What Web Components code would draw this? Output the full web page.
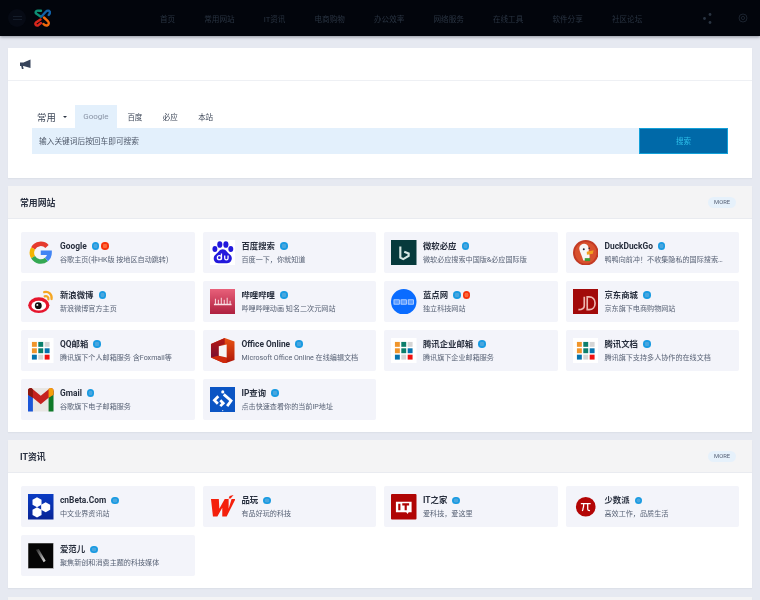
<!DOCTYPE html>
<html lang="zh">
<head>
<meta charset="utf-8">
<title>导航</title>
<style>
  html, body { margin: 0; padding: 0; height: 600px; overflow: hidden; }
  body {
    background: #e6e9f1;
    font-family: Roboto, "Noto Sans CJK SC", sans-serif;
  }
</style>
</head>
<body>
<nav-bar></nav-bar>
<page-main>
  <search-panel></search-panel>

  <site-section heading="常用网站">
    <site-card name="Google" desc="谷歌主页(非HK版 按地区自动跳转)" icon="google" hot></site-card>
    <site-card name="百度搜索" desc="百度一下，你就知道" icon="baidu"></site-card>
    <site-card name="微软必应" desc="微软必应搜索中国版&必应国际版" icon="bing"></site-card>
    <site-card name="DuckDuckGo" desc="鸭鸭向前冲！不收集隐私的国际搜索…" icon="duck"></site-card>
    <site-card name="新浪微博" desc="新浪微博官方主页" icon="weibo"></site-card>
    <site-card name="哔哩哔哩" desc="哔哩哔哩动画 知名二次元网站" icon="bili"></site-card>
    <site-card name="蓝点网" desc="独立科技网站" icon="landian" hot></site-card>
    <site-card name="京东商城" desc="京东旗下电商购物网站" icon="jd"></site-card>
    <site-card name="QQ邮箱" desc="腾讯旗下个人邮箱服务 含Foxmail等" icon="tencent"></site-card>
    <site-card name="Office Online" desc="Microsoft Office Online 在线编辑文档" icon="office"></site-card>
    <site-card name="腾讯企业邮箱" desc="腾讯旗下企业邮箱服务" icon="tencent"></site-card>
    <site-card name="腾讯文档" desc="腾讯旗下支持多人协作的在线文档" icon="tencent"></site-card>
    <site-card name="Gmail" desc="谷歌旗下电子邮箱服务" icon="gmail"></site-card>
    <site-card name="IP查询" desc="点击快速查看你的当前IP地址" icon="ip"></site-card>
  </site-section>

  <site-section heading="IT资讯">
    <site-card name="cnBeta.Com" desc="中文业界资讯站" icon="cnbeta"></site-card>
    <site-card name="品玩" desc="有品好玩的科技" icon="pingwest"></site-card>
    <site-card name="IT之家" desc="爱科技，爱这里" icon="ithome"></site-card>
    <site-card name="少数派" desc="高效工作，品质生活" icon="sspai"></site-card>
    <site-card name="爱范儿" desc="聚焦新创和消费主题的科技媒体" icon="ifanr"></site-card>
  </site-section>

  <site-section></site-section>
</page-main>

<script>
const ICONS = {
  google: `<svg viewBox="0 0 26 26"><g fill="none" stroke-width="4.600">
    <path d="M19.400 6.600A9 9 0 0 0 5.200 8.500" stroke="#e53a2e"/>
    <path d="M5.200 8.500a9 9 0 0 0 0 9" stroke="#f4b400"/>
    <path d="M5.200 17.500a9 9 0 0 0 13.600 2.400" stroke="#34a853"/>
    <path d="M18.800 19.900A9 9 0 0 0 22 13H13" stroke="#4285f4"/></g></svg>`,
  baidu: `<svg viewBox="0 0 26 26"><rect width="26" height="26" fill="#fff"/><g fill="#2319dc">
    <ellipse cx="5" cy="9.200" rx="2.500" ry="3.100"/><ellipse cx="10" cy="4.600" rx="2.600" ry="3.400"/>
    <ellipse cx="16.200" cy="4.600" rx="2.600" ry="3.400"/><ellipse cx="21.200" cy="9.200" rx="2.500" ry="3.100"/>
    <path d="M13 9.500c3.500 0 4.200 3 6.600 4.700 2.600 1.900 3.100 4 2.300 6.200-.8 2.500-3.200 3.600-5.300 3.300H9.400c-2.600.3-4.800-1-5.400-3.300-.6-2.300.1-4.300 2.300-6 2.600-2 3.300-4.900 6.700-4.900z"/></g>
    <g fill="none" stroke="#fff" stroke-width="1.300"><circle cx="9.600" cy="18" r="2.100"/><path d="M11.700 13.800V20M15 15.900v2.700a1.700 1.700 0 0 0 3.400 0v-2.700"/></g></svg>`,
  bing: `<svg viewBox="0 0 26 26"><rect width="26" height="26" fill="#063a3c"/>
    <path d="M9.500 6.500v11.500l3 1.500 5.500-3.300v-2.400l-4.500-1.800" fill="none" stroke="#d6e8e4" stroke-width="2.200"/></svg>`,
  duck: `<svg viewBox="0 0 26 26"><circle cx="13" cy="13" r="13" fill="#c23a24"/><circle cx="13" cy="13" r="11" fill="#d8512e"/>
    <path d="M8 5c3-2 6.500-1 7.500 1.500 1.100 3 0 5 1 7.500.8 2 .6 4.500-.5 7H10.500c-1-4-3.500-8.500-4-11.500C6.200 7.500 6.800 6 8 5z" fill="#f6f6f6"/>
    <path d="M14 12l7-1.500-.8 3.500-6 1z" fill="#f2a01e"/><path d="M12 18.500h5.500v3H12z" fill="#3f9c35"/>
    <circle cx="11" cy="9.500" r="1" fill="#223"/><circle cx="16.500" cy="8.500" r=".8" fill="#223"/></svg>`,
  weibo: `<svg viewBox="0 0 26 26"><ellipse cx="11" cy="16.500" rx="10.800" ry="8" fill="#e6162d"/><ellipse cx="11" cy="17" rx="7.500" ry="5" fill="#fff"/>
    <circle cx="10.500" cy="17" r="3.500" fill="#111"/><circle cx="9.500" cy="16.200" r="1" fill="#fff"/>
    <path d="M17 7.500c2-.8 4.200.5 3.800 3M16.500 3.200c4.500-1.200 8.300 2.300 7.500 7" fill="none" stroke="#f5a623" stroke-width="2.300" stroke-linecap="round"/></svg>`,
  bili: `<svg viewBox="0 0 26 26"><defs><linearGradient id="bl" x1="0" y1="0" x2="0" y2="1"><stop offset="0" stop-color="#e8607a"/><stop offset="1" stop-color="#ad1f3e"/></linearGradient></defs>
    <rect width="26" height="26" fill="url(#bl)"/><path d="M4 15h1V10h1v5h2v-4h1v4h2v-6h1v6h2v-4h1v4h2v-6h1v6h2v-3h1v3h1v1.500H4z" fill="#f9dfe4"/></svg>`,
  landian: `<svg viewBox="0 0 26 26"><circle cx="13" cy="13" r="13" fill="#0a6cff"/><g fill="#5a9bff" stroke="#dbe8ff" stroke-width=".7"><rect x="3" y="11" width="5.500" height="4.500"/><rect x="10.200" y="11" width="5.500" height="4.500"/><rect x="17.500" y="11" width="5.500" height="4.500"/></g></svg>`,
  jd: `<svg viewBox="0 0 26 26"><rect width="26" height="26" fill="#a20a0a"/><g fill="none" stroke="#eeb6b0" stroke-width="1.700"><path d="M11.500 8v9c0 2.500-1.500 4-6 4"/><path d="M14.500 8v13h2c3.500 0 6-2.500 6-6.500S20 8 16.500 8z"/></g></svg>`,
  tencent: `<svg viewBox="0 0 26 26"><rect width="26" height="26" fill="#fff"/>
    <rect x="4" y="4" width="5" height="5" fill="#f0952b"/><rect x="10.500" y="4" width="5" height="5" fill="#0c7f6c"/><rect x="17" y="4" width="5" height="5" fill="#d5d5d5"/>
    <rect x="4" y="10.500" width="5" height="5" fill="#f0952b"/><rect x="10.500" y="10.500" width="5" height="5" fill="#0c7f6c"/><rect x="17" y="10.500" width="5" height="5" fill="#0573ad"/>
    <rect x="4" y="17" width="5" height="5" fill="#0573ad"/><rect x="10.500" y="17" width="5" height="5" fill="#d5d5d5"/><rect x="17" y="17" width="5" height="5" fill="#f01010"/></svg>`,
  office: `<svg viewBox="0 0 26 26"><defs><linearGradient id="of" x1="0" y1="0" x2="0" y2="1"><stop offset="0" stop-color="#e85414"/><stop offset="1" stop-color="#ae1408"/></linearGradient><linearGradient id="ol" x1="0" y1="0" x2="0" y2="1"><stop offset="0" stop-color="#b81a12"/><stop offset="1" stop-color="#7a0e30"/></linearGradient></defs>
    <path d="M1 6l14-6 10 3.500v19L15 26 1 20z" fill="url(#of)"/><path d="M1 6l14-6v6L9 8.500V18L1 20z" fill="url(#ol)"/><path d="M1 20l8-2 8 2v6h-2z" fill="#cf2a0c"/><path d="M9 8.500L17 6.500V20l-8-2z" fill="#f6f6f6"/></svg>`,
  gmail: `<svg viewBox="0 0 26 26"><rect y="1" width="26" height="24" rx="2" fill="#e8e6e3"/><path d="M0 3.500V25h5V10z" fill="#1a56d8"/><path d="M21 10v15h5V3.500z" fill="#0f7a2a"/><path d="M0 3.500C0 1.500 2.500.5 4 1.500L13 9l9-7.500c1.500-1 4 0 4 2V8l-5 3-8 6.500L5 11 0 8z" fill="#c5221f"/><path d="M21 1.800l1-.3c1.500-1 4 0 4 2V8l-5 3z" fill="#f59e0b"/><path d="M0 3.500C0 1.500 2.500.5 4 1.500L5 2.500V11L0 8z" fill="#8c1710"/></svg>`,
  ip: `<svg viewBox="0 0 26 26"><rect width="26" height="26" fill="#0b55c4"/><g fill="none" stroke="#fff" stroke-width="2.800"><path d="M8.500 9.500l-4 4 3.500 3.500"/><path d="M10.500 13.500l3 3-3 3"/><path d="M14 7.500l7.500 6.500-4 5.500"/></g><circle cx="13" cy="5" r="1.600" fill="#fff"/><circle cx="13" cy="24" r=".6" fill="#fff"/></svg>`,
  cnbeta: `<svg viewBox="0 0 26 26"><defs><linearGradient id="cb" x1="0" y1="0" x2="0" y2="1"><stop offset="0" stop-color="#0a3cc4"/><stop offset="1" stop-color="#082496"/></linearGradient></defs><rect width="26" height="26" fill="url(#cb)"/><g fill="#fff"><path d="M9.200 3.200l4.600 2.600v5.200l-4.600 2.600-4.600-2.600V5.800z"/><path d="M18 8.300l4.600 2.600v5.200L18 18.700l-4.600-2.600v-5.200z"/><path d="M9.200 13.500l4.600 2.600v5.200l-4.600 2.600-4.600-2.600v-5.200z"/></g></svg>`,
  pingwest: `<svg viewBox="0 0 26 26"><path d="M1 5h8l.5 10L15 5h4l0 10L22 5h4l-9 18h-4.500V14L7.500 23H3z" fill="#f4200c"/><path d="M20 2l4-1-3 3.500h-2z" fill="#f4200c"/></svg>`,
  ithome: `<svg viewBox="0 0 26 26"><rect width="26" height="26" rx="1" fill="#b00505"/><path d="M5 8h16v10.500h-3l-1 2-1.500-2H5z" fill="#fff"/><path d="M8.500 10v6.500M11.500 10.500h7M15 10.500v6" stroke="#b00505" stroke-width="2.200" fill="none"/></svg>`,
  sspai: `<svg viewBox="0 0 26 26"><circle cx="13" cy="13" r="10" fill="#b30505"/><path d="M8 9.800h10M11 9.800c0 3-.3 5-1.500 7.500M15 9.800v5.200c0 1.500.9 2.200 2.300 1.800" fill="none" stroke="#fff" stroke-width="1.300"/></svg>`,
  ifanr: `<svg viewBox="0 0 26 26"><defs><linearGradient id="fr" x1="0" y1="0" x2="1" y2="1"><stop offset="0" stop-color="#222"/><stop offset="1" stop-color="#e4e4e4"/></linearGradient></defs><rect width="26" height="26" fill="#050505" stroke="#d8d8d8" stroke-width=".6"/><path d="M8 7l3-1 7 12-2 1.500z" fill="url(#fr)"/></svg>`
};

class NavBar extends HTMLElement {
  constructor() {
    super();
    const items = ['首页', '常用网站', 'IT资讯', '电商购物', '办公效率', '网络服务', '在线工具', '软件分享', '社区论坛'];
    this.attachShadow({ mode: 'open' }).innerHTML = `
      <style>
        :host { display: flex; align-items: center; height: 36px; background: #02050c; box-shadow: 0 1px 3px rgba(30,35,50,.45); position: relative; }
        .burger { width: 18px; height: 18px; margin-left: 8px; border-radius: 50%; background: #060a14; display: flex; flex-direction: column; justify-content: center; gap: 2px; align-items: center; }
        .burger i { width: 9px; height: 1px; background: #151d2a; }
        .logo { width: 18px; height: 18px; margin-left: 7px; }
        ul { display: flex; gap: 29.100px; list-style: none; margin: 0 0 0 109px; padding: 0; font-size: 7.600px; color: #2a3442; filter: blur(.3px); }
        .tools { margin-left: auto; display: flex; align-items: center; gap: 26px; margin-right: 12px; }
        svg { display: block; }
      </style>
      <div class="burger"><i></i><i></i></div>
      <svg class="logo" viewBox="0 0 18 18" fill="none" stroke-width="2.400" stroke-linecap="round">
        <path d="M7.500 7.500L3 4.500c-1-1.500.5-3.300 2.500-2.800H8" stroke="#0e8f74"/>
        <path d="M8.500 7.500l4.500-5c1-1 3-1.200 3.700 0 .5 1.200 0 2.500-1 3.500" stroke="#1161a8"/>
        <path d="M7.500 10.500L3 13.500c-1.500 1.500 0 3.500 2 3l3-2.500" stroke="#d8261c"/>
        <path d="M11 8.500l3.800 3.500c1.700 1.700 1 4-.8 4.500-1.400.2-2.500-.3-3.500-1.500" stroke="#f26a0c"/>
      </svg>
      <ul>${items.map(t => `<li>${t}</li>`).join('')}</ul>
      <div class="tools">
        <svg width="9" height="11" viewBox="0 0 9 11" fill="#2a3442"><circle cx="1.500" cy="5.500" r="1.400"/><circle cx="7" cy="1.500" r="1.400"/><circle cx="7" cy="9.500" r="1.400"/></svg>
        <svg width="10" height="10" viewBox="0 0 10 10" fill="none" stroke="#1a222e" stroke-width="1"><circle cx="5" cy="5" r="4"/><circle cx="5" cy="5" r="1.600"/></svg>
      </div>`;
  }
}

class PageMain extends HTMLElement {
  constructor() {
    super();
    this.attachShadow({ mode: 'open' }).innerHTML = `
      <style>
        :host { display: flex; flex-direction: column; gap: 8.400px; padding: 12px 8px 0; height: 552px; overflow: hidden; filter: blur(.3px); }
        ::slotted(*) { flex: none; }
      </style>
      <slot></slot>`;
  }
}

class SearchPanel extends HTMLElement {
  constructor() {
    super();
    this.attachShadow({ mode: 'open' }).innerHTML = `
      <style>
        :host { display: block; background: #fff; height: 130px; margin-bottom: -.4px; box-shadow: 0 1px 1px rgba(60,70,100,.05); }
        .notice { height: 32px; border-bottom: 1px solid #eef0f4; display: flex; align-items: center; padding-left: 12px; }
        .box { padding: 24px 24px 0; }
        .tabs { display: flex; align-items: stretch; height: 23px; font-size: 7.500px; color: #3d4758; }
        .group { font-size: 9.400px; width: 42.600px; padding-left: 5px; box-sizing: border-box; display: flex; align-items: center; gap: 7px; }
        .group::after { content: ''; border: 2.500px solid transparent; border-top-color: #2d3544; margin-top: 3px; }
        .tab { display: flex; align-items: center; padding: 0 10.200px 1px; }
        .tab.on { background: #e3f0fc; color: #8a94a6; font-size: 8px; width: 42.600px; box-sizing: border-box; padding: 0 0 1px; justify-content: center; }
        .row { display: flex; height: 26px; }
        .input { flex: 1; background: #e3f0fc; font-size: 7.700px; color: #4d5768; display: flex; align-items: center; padding: 0 0 1px 7px; }
        .btn { width: 89px; background: #0069a8; border: 1px solid #12a0d8; box-sizing: border-box; color: #2cc0ea; font-size: 7.500px; display: flex; align-items: center; justify-content: center; padding-bottom: 1px; }
      </style>
      <div class="notice">
        <svg width="11" height="11" viewBox="0 0 11 11" fill="#36435a"><path d="M0 3.500h3.500L10.500.5v8.500L3.500 7H3l.6 3H1.900L1.200 7H0z"/></svg>
      </div>
      <div class="box">
        <div class="tabs">
          <div class="group">常用</div>
          <div class="tab on">Google</div>
          <div class="tab">百度</div>
          <div class="tab">必应</div>
          <div class="tab">本站</div>
        </div>
        <div class="row">
          <div class="input">输入关键词后按回车即可搜索</div>
          <div class="btn">搜索</div>
        </div>
      </div>`;
  }
}

class SiteSection extends HTMLElement {
  constructor() {
    super();
    const heading = this.getAttribute('heading');
    this.attachShadow({ mode: 'open' }).innerHTML = `
      <style>
        :host { display: block; background: #fff; box-shadow: 0 1px 1px rgba(60,70,100,.05); }
        header { height: 32px; background: #f4f4f5; border-bottom: 1px solid #e9ebf0; display: flex; align-items: center; justify-content: space-between; padding: 0 16px 0 12px; }
        h2 { margin: 0; font-size: 8.900px; font-weight: 700; color: #2b3242; }
        .more { background: #e6f1fb; color: #566076; font-size: 5.800px; padding: 0 6px; height: 11px; line-height: 11px; border-radius: 6px; }
        .grid { display: grid; grid-template-columns: repeat(4, 1fr); gap: 8px; padding: 13px 13px 12px; }
      </style>
      <header>${heading ? `<h2>${heading}</h2><span class="more">MORE</span>` : ''}</header>
      <div class="grid"><slot></slot></div>`;
  }
}

class SiteCard extends HTMLElement {
  constructor() {
    super();
    this.attachShadow({ mode: 'open' }).innerHTML = `
      <style>
        :host { display: flex; align-items: center; height: 41px; background: #f3f4fa; border-radius: 2px; padding: 0 12px 0 7px; box-sizing: border-box; min-width: 0; gap: 6.500px; }
        .ico { width: 25.500px; height: 25.500px; flex: none; }
        .ico svg { display: block; width: 100%; height: 100%; }
        .txt { min-width: 0; flex: 1; }
        .name { display: flex; align-items: center; gap: 2px; font-size: 8.400px; font-weight: 700; color: #282f3e; line-height: 12px; }
        .name b { width: 7.500px; height: 7.500px; border-radius: 50%; background: radial-gradient(#4aa6de 0 35%, #1a9be2 45%); margin-left: 3px; }
        .name b + b { background: radial-gradient(#fb6a3c 0 35%, #f6330c 45%); margin-left: 0; }
        .desc { font-size: 7.100px; color: #586275; line-height: 10px; margin-top: 3px; white-space: nowrap; }
      </style>
      <div class="ico"></div>
      <div class="txt">
        <div class="name"><span></span><b></b></div>
        <div class="desc"></div>
      </div>`;
    const root = this.shadowRoot;
    root.querySelector('.ico').innerHTML = ICONS[this.getAttribute('icon')] || '';
    root.querySelector('.name span').textContent = this.getAttribute('name');
    root.querySelector('.desc').textContent = this.getAttribute('desc');
    if (this.hasAttribute('hot')) {
      root.querySelector('.name').appendChild(document.createElement('b'));
    }
  }
}

customElements.define('nav-bar', NavBar);
customElements.define('page-main', PageMain);
customElements.define('search-panel', SearchPanel);
customElements.define('site-section', SiteSection);
customElements.define('site-card', SiteCard);
</script>
</body>
</html>
